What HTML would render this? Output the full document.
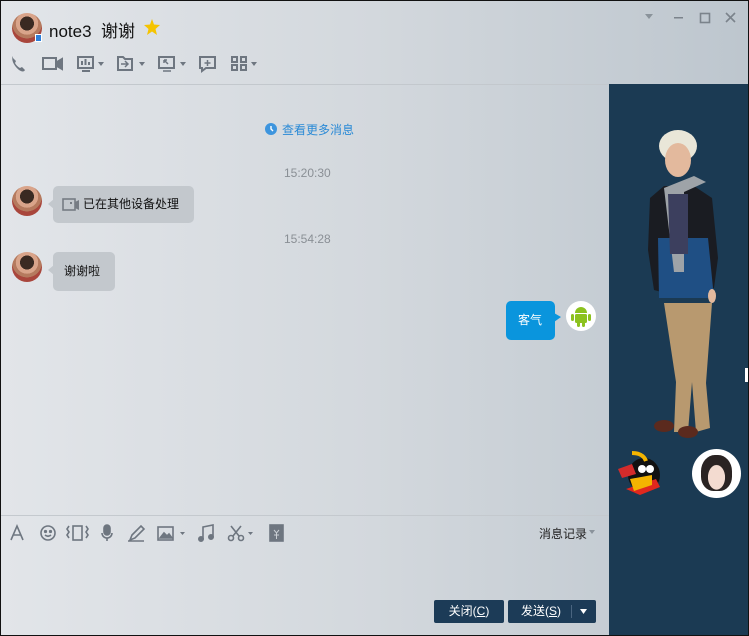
<!DOCTYPE html>
<html><head><meta charset="utf-8"><style>
*{margin:0;padding:0;box-sizing:border-box}
body{width:749px;height:636px;overflow:hidden;font-family:"Liberation Sans","Noto Sans CJK SC",sans-serif;background:#000}
.win{position:absolute;left:0;top:0;width:749px;height:636px;background:linear-gradient(90deg,#e2e5e9 0%,#d3d8dd 50%,#bdc6ce 100%);overflow:hidden}
.frame{position:absolute;left:0;top:0;width:749px;height:636px;border:1px solid #111;pointer-events:none}
.abs{position:absolute}
.av{border-radius:50%;background:radial-gradient(circle at 50% 35%,#3a2a22 0 28%,#d9a48a 29% 45%,#b57a5e 46% 60%,#a9463c 61%);}
.bubble{position:absolute;border-radius:5px;font-size:12px;color:#111;background:#c3c8cd;line-height:14px}
.time{position:absolute;font-size:12px;color:#8a8f95}
.btn{position:absolute;background:#1c3b57;color:#fff;font-size:12px;border-radius:2px;height:23px;line-height:23px;text-align:center}
</style></head><body>
<div class="win">
 <div class="abs av" style="left:12px;top:13px;width:30px;height:30px"></div>
 <div class="abs" style="left:35px;top:34px;width:7px;height:8px;background:#2f7fd8;border:1px solid #fff"></div>
 <div class="abs" style="left:49px;top:17px;font-size:17px;color:#111">note3&nbsp; 谢谢</div>
 <svg class="abs" style="left:144px;top:19px" width="16" height="16" viewBox="0 0 16 16"><polygon points="8,0 10,5.5 16,6 11.5,10 13,16 8,12.5 3,16 4.5,10 0,6 6,5.5" fill="#f5c400"/></svg>
 <svg class="abs" style="left:645px;top:12px" width="100" height="14"><polygon points="0,2 8,2 4,7" fill="#8a939b"/><rect x="29" y="5" width="9" height="1.5" fill="#7b838b"/><rect x="55.5" y="1.5" width="9" height="9" fill="none" stroke="#7b838b" stroke-width="1.6"/><path d="M81 1l9 9M90 1l-9 9" stroke="#7b838b" stroke-width="1.6"/></svg>
 <svg class="abs" style="left:10px;top:54px" width="260" height="20" fill="none" stroke="#6e7680" stroke-width="2">
  <path d="M3 2c-2 3 0 9 6 14 3 2 5 2 6 0l-3-3-2 1c-2-1-4-3-5-5l1-2-3-3z" fill="#6e7680" stroke="none"/>
  <rect x="33" y="4" width="13" height="11"/><path d="M47 8l5-3v10l-5-3z" fill="#6e7680"/>
  <rect x="68" y="3" width="15" height="11"/><path d="M72 11v-4M75.5 11v-6M79 11v-3M72 17h8"/><polygon points="88,8 94,8 91,12" fill="#6e7680" stroke="none"/>
  <path d="M108 3h5l2 2h7v11h-14z"/><path d="M111 10h6M115 7l3 3-3 3" stroke-width="1.5"/><polygon points="129,8 135,8 132,12" fill="#6e7680" stroke="none"/>
  <rect x="149" y="3" width="15" height="11"/><path d="M153 17h8M154 6l4 4M154 6h3M154 6v3" stroke-width="1.5"/><polygon points="170,8 176,8 173,12" fill="#6e7680" stroke="none"/>
  <path d="M190 3h15v11h-9l-4 3v-3h-2z"/><path d="M197.5 6v6M194.5 9h6" stroke-width="1.5"/>
  <rect x="222" y="3" width="5" height="5"/><rect x="231" y="3" width="5" height="5"/><rect x="222" y="11" width="5" height="5"/><rect x="231" y="11" width="5" height="5"/><polygon points="241,8 247,8 244,12" fill="#6e7680" stroke="none"/>
 </svg>
 <div class="abs" style="left:0;top:84px;width:609px;height:1px;background:#c3c8cd"></div>
 <div class="abs" style="left:609px;top:84px;width:140px;height:552px;background:#1b3a53"></div>
 <svg class="abs" style="left:640px;top:128px" width="85" height="315" viewBox="0 0 85 315">
  <ellipse cx="38" cy="18" rx="19" ry="16" fill="#e9e6d8"/>
  <ellipse cx="38" cy="32" rx="13" ry="17" fill="#e3b99d"/>
  <path d="M10 70l14-12 30 0 18 12 6 60 -4 30 -30 10 -30-8 -6-40z" fill="#1a1c22"/>
  <path d="M18 110l50 0 6 60 -55 0z" fill="#1f4f84"/>
  <path d="M24 60l30-12 12 6-22 10 0 80-10 0z" fill="#9ea3a8"/>
  <path d="M28 66h20v60H30z" fill="#3c3f5e"/>
  <path d="M24 175h48l-6 80 4 45-14 4-4-50-4 50-14 0 2-50z" fill="#b8996f"/>
  <ellipse cx="24" cy="298" rx="10" ry="6" fill="#5b2a1e"/><ellipse cx="48" cy="304" rx="10" ry="6" fill="#5b2a1e"/>
  <ellipse cx="72" cy="168" rx="4" ry="7" fill="#e3b99d"/>
 </svg>
 <svg class="abs" style="left:616px;top:451px" width="48" height="44" viewBox="0 0 48 44">
  <ellipse cx="28" cy="24" rx="16" ry="17" fill="#111"/>
  <path d="M10 38l30-10 4 8-20 8z" fill="#e0281e"/>
  <path d="M14 28l22-4 0 10-18 6z" fill="#f4b400"/>
  <path d="M2 18l14-5 4 10-14 4z" fill="#d32b2b"/>
  <circle cx="26" cy="18" r="4" fill="#fff"/><circle cx="34" cy="18" r="4" fill="#fff"/>
  <path d="M16 2c6 0 12 2 14 8" stroke="#f4b400" stroke-width="4" fill="none"/>
 </svg>
 <div class="abs" style="left:692px;top:449px;width:49px;height:49px;border-radius:50%;background:#fff"></div>
 <div class="abs" style="left:701px;top:455px;width:31px;height:36px;border-radius:45% 45% 40% 40%;background:radial-gradient(ellipse at 50% 62%,#f3dbd0 0 38%,#2a2322 40%)"></div>
 <div class="abs" style="left:745px;top:368px;width:4px;height:14px;background:#fff"></div>
 <svg class="abs" style="left:265px;top:123px" width="12" height="12"><circle cx="6" cy="6" r="6" fill="#3d95de"/><path d="M6 3v3l2 2" stroke="#fff" stroke-width="1.4" fill="none"/></svg>
 <div class="abs" style="left:282px;top:121px;font-size:12px;color:#2a8ad6">查看更多消息</div>
 <div class="time" style="left:284px;top:166px">15:20:30</div>
 <div class="abs av" style="left:12px;top:186px;width:30px;height:30px"></div>
 <div class="abs" style="left:48px;top:199px;width:0;height:0;border-top:5px solid transparent;border-bottom:5px solid transparent;border-right:6px solid #c3c8cd"></div>
 <div class="bubble" style="left:53px;top:186px;width:141px;height:37px;padding:11px 0 0 30px">已在其他设备处理</div>
 <svg class="abs" style="left:62px;top:198px" width="18" height="14"><rect x="1" y="1" width="12" height="11" fill="none" stroke="#767c84" stroke-width="1.6"/><path d="M13 4l4-2v10l-4-2z" fill="#767c84"/><rect x="8" y="4" width="2" height="2" fill="#767c84"/></svg>
 <div class="time" style="left:284px;top:232px">15:54:28</div>
 <div class="abs av" style="left:12px;top:252px;width:30px;height:30px"></div>
 <div class="abs" style="left:48px;top:265px;width:0;height:0;border-top:5px solid transparent;border-bottom:5px solid transparent;border-right:6px solid #c3c8cd"></div>
 <div class="bubble" style="left:53px;top:252px;width:62px;height:39px;padding:12px 0 0 11px">谢谢啦</div>
 <div class="bubble" style="left:506px;top:301px;width:49px;height:39px;background:#0a95dd;color:#fff;padding:12px 0 0 12px">客气</div>
 <div class="abs" style="left:554px;top:313px;width:0;height:0;border-top:4px solid transparent;border-bottom:5px solid transparent;border-left:7px solid #0a95dd"></div>
 <div class="abs" style="left:566px;top:301px;width:30px;height:30px;border-radius:50%;background:#fff"></div>
 <svg class="abs" style="left:570px;top:304px" width="22" height="24" viewBox="0 0 22 24"><path d="M5 9a6 6 0 0 1 12 0z" fill="#8cc21f"/><rect x="5" y="10" width="12" height="9" rx="1.5" fill="#8cc21f"/><rect x="1" y="10" width="3" height="7" rx="1.5" fill="#8cc21f"/><rect x="18" y="10" width="3" height="7" rx="1.5" fill="#8cc21f"/><rect x="7" y="18" width="3" height="5" rx="1.5" fill="#8cc21f"/><rect x="12" y="18" width="3" height="5" rx="1.5" fill="#8cc21f"/></svg>
 <div class="abs" style="left:0;top:515px;width:609px;height:1px;background:#c4c9ce"></div>
 <svg class="abs" style="left:8px;top:523px" width="282" height="20" fill="none" stroke="#6e7680" stroke-width="1.6">
  <path d="M3 17l6-14 6 14M5 12h8"/>
  <circle cx="40" cy="10" r="7"/><circle cx="37.5" cy="8.5" r="0.8" fill="#6e7680"/><circle cx="42.5" cy="8.5" r="0.8" fill="#6e7680"/><path d="M37 12q3 2.5 6 0"/>
  <rect x="65" y="3" width="9" height="14"/><path d="M61 3l-2 3 2 3-2 3 2 3M78 3l2 3-2 3 2 3-2 3"/>
  <rect x="96" y="2" width="6" height="10" rx="3" fill="#6e7680"/><path d="M94 10a5 5 0 0 0 10 0M99 15v3"/>
  <path d="M122 17l2-5 9-9 3 3-9 9zM120 18h16"/>
  <rect x="150" y="4" width="15" height="13"/><path d="M152 15l4-5 3 3 2-2 3 4z" fill="#6e7680"/><polygon points="172,9 177,9 174.5,12" fill="#6e7680" stroke="none"/>
  <path d="M195 16V4l10-2v12"/><circle cx="193" cy="16" r="2.2" fill="#6e7680"/><circle cx="203" cy="14" r="2.2" fill="#6e7680"/>
  <path d="M223 3l8 10M233 3l-8 10"/><circle cx="223" cy="15" r="2.5"/><circle cx="233" cy="15" r="2.5"/><polygon points="240,9 245,9 242.5,12" fill="#6e7680" stroke="none"/>
  <rect x="262" y="2" width="13" height="16" fill="#6e7680"/><path d="M266 7l2.5 3 2.5-3M268.5 10v6M266 12h5" stroke="#c9ced3" stroke-width="1"/>
 </svg>
 <div class="abs" style="left:539px;top:525px;font-size:12px;color:#222">消息记录</div>
 <svg class="abs" style="left:589px;top:530px" width="6" height="5"><polygon points="0,0 6,0 3,4" fill="#8a939b"/></svg>
 <div class="btn" style="left:434px;top:600px;width:70px">关闭(<u>C</u>)</div>
 <div class="btn" style="left:508px;top:600px;width:88px;text-align:left;padding-left:13px">发送(<u>S</u>)</div>
 <div class="abs" style="left:571px;top:605px;width:1px;height:13px;background:#4a6580"></div>
 <svg class="abs" style="left:580px;top:609px" width="7" height="5"><polygon points="0,0 7,0 3.5,5" fill="#fff"/></svg>
</div>
<div class="frame"></div>
</body></html>
